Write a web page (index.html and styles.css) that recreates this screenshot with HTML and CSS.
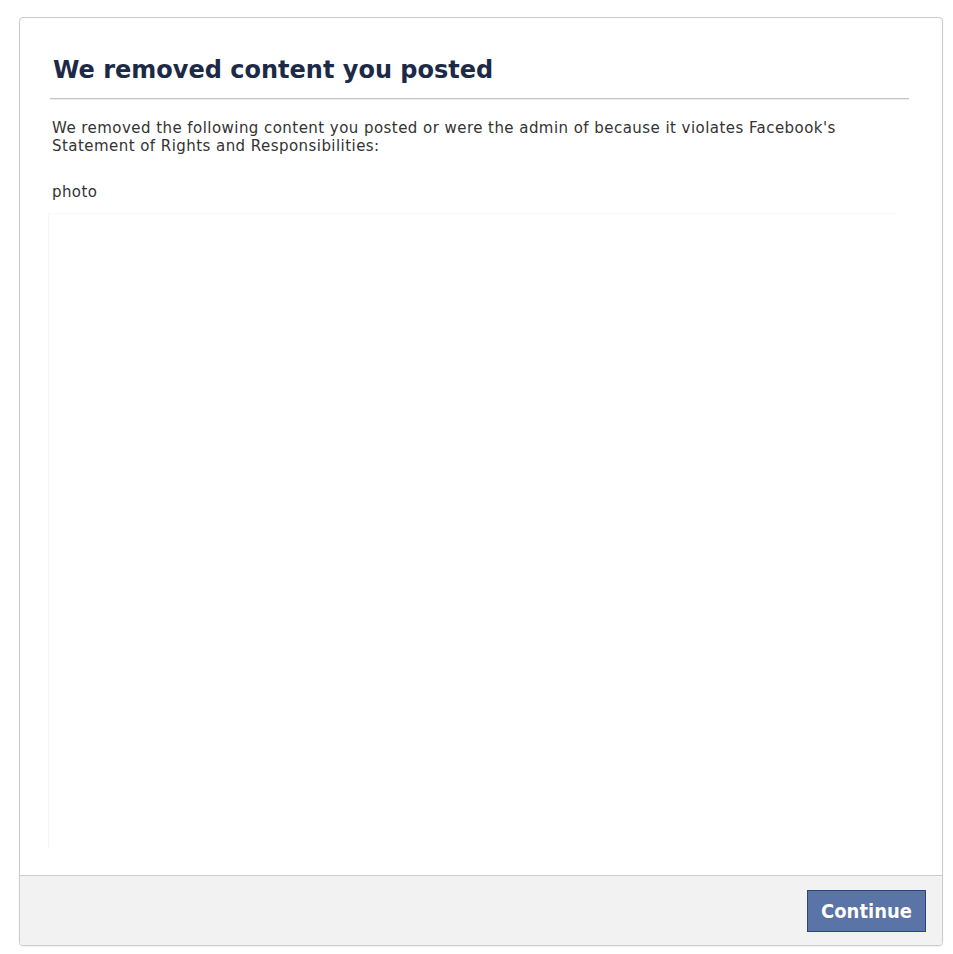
FILE: index.html
```html
<!DOCTYPE html>
<html>
<head>
<meta charset="utf-8">
<link rel="stylesheet" href="styles.css">
</head>
<body>
<div class="dialog">
  <div class="dialog-body">
    <h2 class="title">We removed content you posted</h2>
    <p class="intro">We removed the following content you posted or were the admin of because it violates Facebook's<br>Statement of Rights and Responsibilities:</p>
    <p class="item">photo</p>
    <div class="content-area"></div>
  </div>
  <div class="dialog-footer">
    <button class="btn-continue">Continue</button>
  </div>
</div>
</body>
</html>
```
FILE: styles.css
```css
html, body {
  margin: 0;
  padding: 0;
  background: #ffffff;
}
body {
  padding: 17px 10px 8px 19px;
  font-family: "DejaVu Sans", Verdana, sans-serif;
}
.dialog {
  width: 924px;
  height: 929px;
  box-sizing: border-box;
  border: 1px solid #cbcbcb;
  border-radius: 4px;
  background: #fff;
  display: flex;
  flex-direction: column;
  overflow: hidden;
  box-shadow: 0 1px 2px rgba(0,0,0,0.06);
}
.dialog-body {
  flex: 1;
  padding: 35px 33px 0 30px;
  display: flex;
  flex-direction: column;
}
.title {
  margin: 0;
  padding: 0 0 11px 3px;
  font-size: 24px;
  font-weight: bold;
  color: #1c2a47;
  line-height: 34px;
  border-bottom: 1px solid #c4c4c4;
  box-shadow: 0 1px 0 #ececec;
}
.intro {
  margin: 20px 0 0 2px;
  font-size: 15px;
  letter-spacing: 0.45px;
  line-height: 18px;
  color: #333;
}
.item {
  margin: 28px 0 0 2px;
  font-size: 15px;
  letter-spacing: 0.4px;
  line-height: 18px;
  color: #333;
}
.content-area {
  height: 634px;
  margin: 12px 12px 0 -2px;
  border-top: 1px solid #f8f8f8;
  border-left: 1px solid #f6f6f6;
}
.dialog-footer {
  margin-top: auto;
  height: 70px;
  box-sizing: border-box;
  background: #f2f2f2;
  border-top: 1px solid #cccccc;
  display: flex;
  justify-content: flex-end;
  align-items: flex-start;
  padding: 14px 16px 0 0;
}
.btn-continue {
  width: 119px;
  height: 42px;
  background: #5b74a8;
  border: 1px solid #29447e;
  color: #fff;
  font-family: "DejaVu Sans Condensed", "DejaVu Sans", sans-serif;
  font-weight: bold;
  font-size: 20px;
  padding: 0;
  cursor: pointer;
  text-shadow: 0 0 1px rgba(0,0,0,0.2);
}
```
